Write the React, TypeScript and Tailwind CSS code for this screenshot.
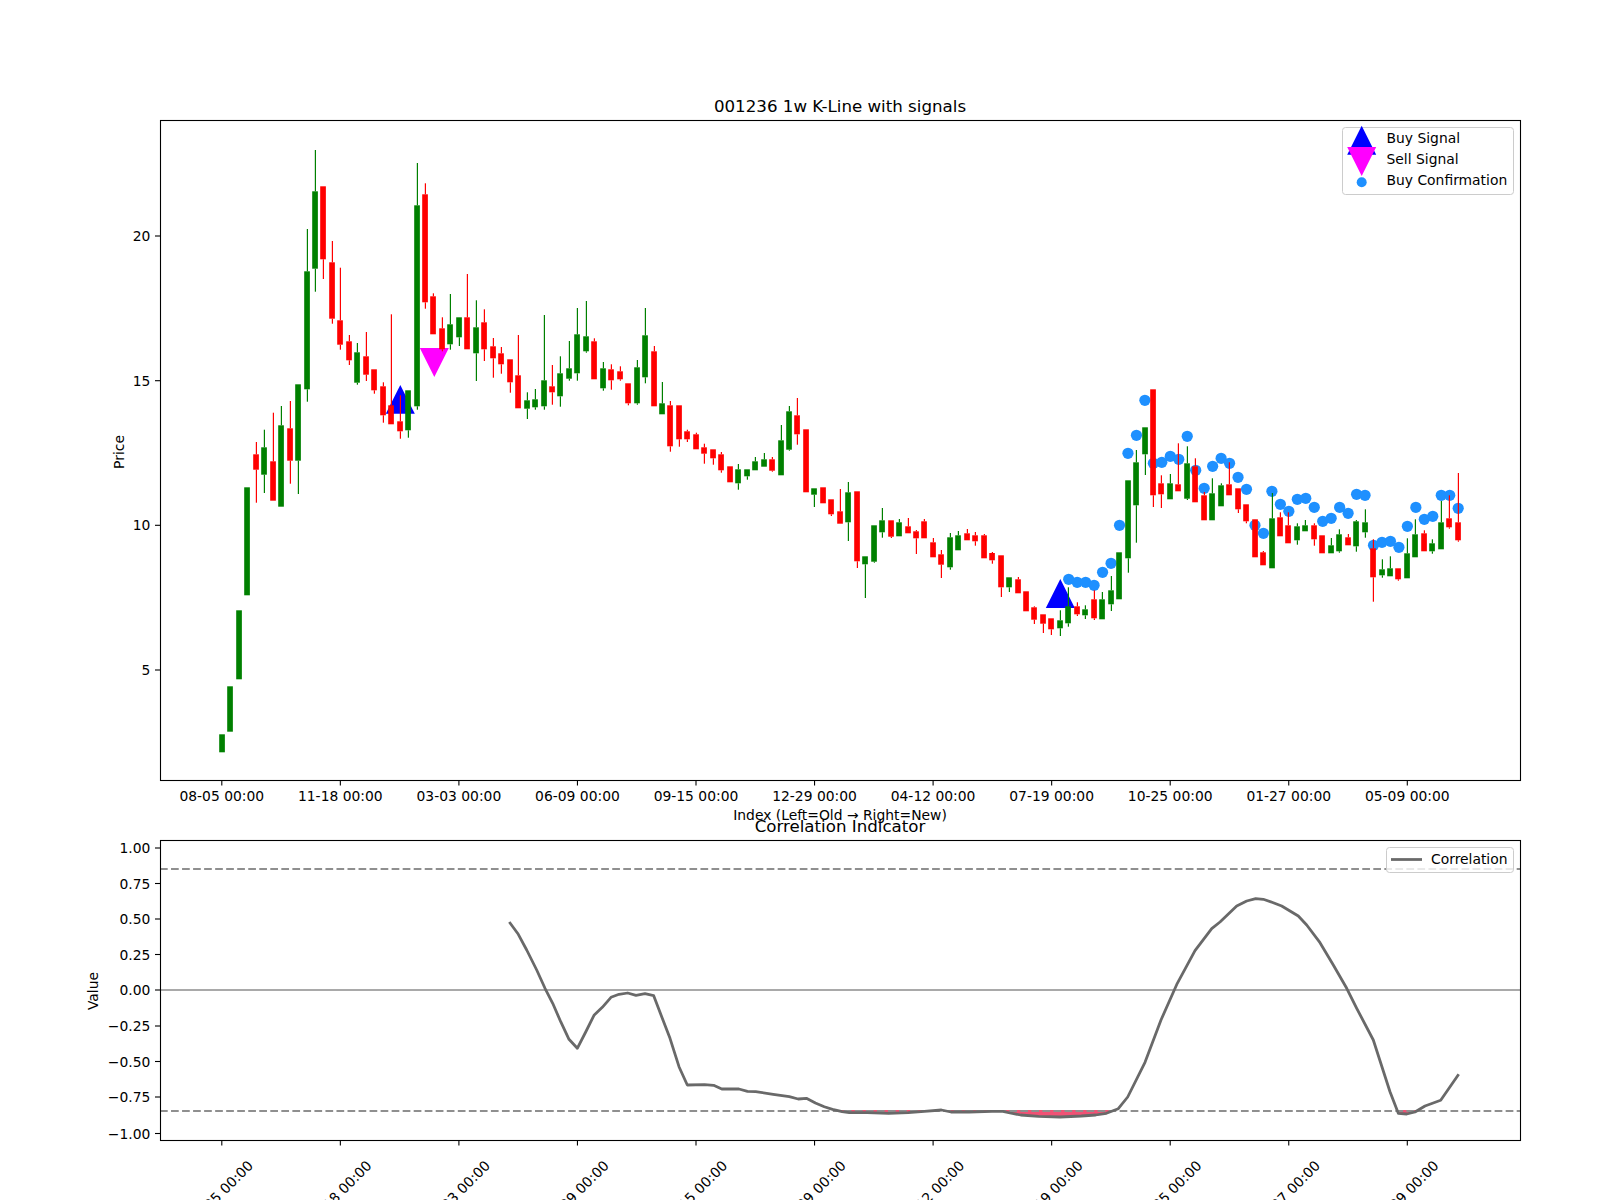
// k-line figure: candle panel on top, correlation panel below
type Candle = [string, number, number, number?, number?];

// color, body top, body bottom, wick top, wick bottom (page pixels)
const candles: Candle[] = [
  ["g", 734.3, 752.3], ["g", 686.3, 731.7], ["g", 610.3, 679.3], ["g", 487.3, 595.3],
  ["r", 454.3, 469.7, 442, 502.7], ["g", 447.3, 474.7, 429.7, 493], ["r", 461.3, 500.7, 412.7], ["g", 425.3, 506.7, 406],
  ["r", 428.3, 460.7, 401, 483.7], ["g", 384.3, 460.7, undefined, 494], ["g", 271.3, 389.3, 229, 401.7], ["g", 191.3, 268.7, 150, 291.7],
  ["r", 186.3, 259.3, undefined, 279], ["r", 262.3, 318.7, 241, 323.7], ["r", 320.3, 344.7, 267.7, 349.7], ["r", 341.3, 360.3, 335, 365],
  ["g", 352.3, 382.7, 343, 384.7], ["r", 356.3, 374.7, 332, 381], ["r", 369.3, 390.3, undefined, 393.7], ["r", 386.3, 415.3, 382.3, 422.7],
  ["r", 405.3, 424.3, 314.3], ["r", 421.3, 431.3, 395.3, 438.7], ["g", 390.3, 430.3, undefined, 437.7], ["g", 205.3, 406.3, 163, 409.7],
  ["r", 194.3, 302.3, 183.3, 308.7], ["r", 296.3, 334.3, 293.3], ["r", 328.3, 349.3, 317.3, 351.3], ["g", 324.3, 344.3, 294, 349.7],
  ["g", 317.3, 337.3, undefined, 346], ["r", 317.3, 349.3, 274], ["g", 327.3, 353.3, 300.3, 381], ["r", 322.3, 349.3, 309.3, 361],
  ["r", 346.3, 358.3, 338, 377.7], ["r", 353.3, 364.3, 347, 373.7], ["r", 359.3, 382.3, undefined, 392.7], ["r", 375.3, 408.3, 335],
  ["g", 400.3, 408.7, 392.3, 419], ["g", 399.3, 407.3, 389, 409.7], ["g", 380.3, 406.3, 315, 409.7], ["r", 386.3, 392.3, 365, 404.7],
  ["g", 373.3, 396.3, 356.3, 406.7], ["g", 368.3, 378.7, 341, 380.7], ["g", 334.3, 373.3, 308, 380.7], ["g", 336.3, 351.3, 301, 352.7],
  ["r", 341.3, 379.3, 338.3], ["g", 368.3, 388.3, 362, 390.7], ["r", 369.3, 380.3, 364.3, 389.7], ["r", 371.3, 379.3, 366.3, 380.7],
  ["r", 383.3, 403.3, undefined, 405.3], ["g", 367.3, 403.3, 360, 404.7], ["g", 335.3, 377.3, 308, 383.3], ["r", 351.3, 406.3, 346],
  ["g", 403.3, 414.3, 382], ["r", 405.3, 446.3, 401, 451.7], ["r", 405.3, 439.3, undefined, 446.7], ["r", 431.3, 439.3, 429.7, 442],
  ["r", 434.3, 449.3, 432.7], ["r", 447.3, 453.7, 443.7, 463.7], ["r", 449.3, 458.3, undefined, 464.7], ["r", 454.3, 470.3, 452, 472.7],
  ["r", 466.3, 482.3], ["g", 469.3, 483.3, 464, 489.7], ["g", 469.3, 476.3, undefined, 479.7], ["g", 461.3, 470.3, 457],
  ["g", 459.3, 466.7, 453], ["r", 459.3, 470.7, 457, 471.7], ["g", 440.3, 475.3, 425], ["g", 411.3, 449.7, 406, 450.7],
  ["r", 415.3, 434.3, 398, 444.7], ["r", 429.3, 492.3], ["g", 488.3, 494.7, undefined, 507], ["r", 487.3, 503.3],
  ["r", 499.3, 514.3, undefined, 516], ["r", 511.3, 523.7, 489], ["g", 492.3, 522.3, 482, 541], ["r", 491.3, 561.3, undefined, 568],
  ["g", 556.3, 564.3, undefined, 598], ["g", 525.3, 561.7, undefined, 562.7], ["g", 520.3, 532.3, 508, 537.7], ["r", 520.3, 536.7, undefined, 538],
  ["g", 522.3, 536.3, 519], ["r", 526.3, 533.3, 518], ["r", 531.3, 538.3, 530, 554], ["r", 521.3, 538.3, 519],
  ["r", 542.3, 557.3, 538], ["r", 554.3, 564.7, 550, 578], ["g", 537.3, 567.3, 533, 569.7], ["g", 535.3, 550.3, 531],
  ["r", 533.3, 540.3, 529], ["r", 535.3, 541.3, 532, 545.7], ["r", 535.3, 558.3, 534], ["r", 553, 560.3, 552, 563.7],
  ["r", 555.3, 587.3, undefined, 597], ["g", 577.3, 587.3, undefined, 592], ["r", 579.3, 593.3, 577], ["r", 591.3, 611.3],
  ["r", 607.3, 619.7, 606.3, 624], ["r", 614.3, 623.7, undefined, 633], ["r", 618.3, 629.3, undefined, 635], ["g", 620.3, 628.3, 610.3, 636],
  ["g", 606.3, 623.3, 587.3, 626.7], ["r", 606.3, 614.3, 602.3, 616], ["g", 609.3, 615.3, 605.3, 619], ["r", 599.3, 618.3, 590.3, 620],
  ["g", 599.3, 619.3, 592], ["g", 590.3, 604.3, 576, 611], ["g", 552.3, 599.3], ["g", 480.3, 558.3, undefined, 572.7],
  ["g", 462.3, 505.3, 450, 542.7], ["g", 427.3, 454.3, undefined, 475], ["r", 389.3, 495.3, undefined, 507], ["r", 483.3, 494.3, 475.3, 508],
  ["g", 483.3, 499.3, 474], ["r", 484.3, 491.3, 443.3], ["g", 463.3, 498.7, 446.3, 500], ["r", 466.3, 502.3, 458.3],
  ["r", 495.3, 520.3, 492], ["g", 493.3, 520.3, 478.3], ["g", 485.3, 506.3, 483.3], ["r", 484.3, 495.3, 462.3],
  ["r", 488.3, 509.3, undefined, 513], ["r", 504.3, 521.3, undefined, 523.3], ["r", 519.3, 557.3], ["r", 552.3, 565.3, 551],
  ["g", 518.3, 568.3, 493], ["r", 517.3, 536.3, 512.3], ["r", 525.3, 543.3, 512.3], ["g", 526.3, 540.3, 523.3, 544.7],
  ["g", 525.3, 531.3, 520], ["r", 525.3, 539.3, 523.3, 545.7], ["r", 535.3, 553.3], ["g", 545.3, 553.3, 538],
  ["g", 534.3, 551.3, 529.3, 552.7], ["r", 537.3, 545.3, 534], ["g", 521.3, 546.3, 520, 551.7], ["g", 522.3, 532.3, 509.3, 537.7],
  ["r", 548.3, 577.3, 539.3, 601.7], ["g", 569.3, 575.3, 559.3, 577.7], ["g", 568.3, 576.3, 556.3], ["r", 568.3, 579.3, undefined, 580.7],
  ["g", 553.3, 578.3, 538.3], ["g", 534.3, 557.3, 519.3], ["r", 533.3, 551.3, 530.3], ["g", 543.3, 551.3, 539.3, 553.7],
  ["g", 522.3, 549.3, 501], ["r", 518.3, 527.3, 495.3, 528.7], ["r", 522.3, 540.3, 473, 541.7],
];

// buy confirmation dots start at candle 100
const dots = [
  579.3, 582.3, 582.3, 585.3, 572.3, 563.3, 525.3, 453.3, 435.3, 400.3, 463.3, 462.3, 456.3, 459.3, 436.3, 470.3,
  488.3, 466.3, 458.3, 463.3, 477.3, 489.3, 525.3, 533.3, 491.3, 504.3, 511.3, 499.3, 498.3, 507.3, 521.3, 518.3,
  507.3, 513.3, 494.3, 495.3, 545.3, 542.3, 541.3, 547.3, 526.3, 507.3, 519.3, 516.3, 495.3, 495.3, 508.3,
];

const corr = [
  [509.3, 922], [518.3, 934.3], [526.7, 950], [536.7, 970], [545, 988.3], [552.7, 1003.3], [560.7, 1021.7], [569, 1039.3],
  [577.3, 1048.3], [585.7, 1032], [594, 1015.3], [602.3, 1007.3], [611, 997.3], [619, 994.3], [627.7, 993], [636, 995.3],
  [645, 993.7], [653.7, 995.7], [661.7, 1016.7], [670, 1038.3], [679, 1066.7], [687.3, 1085], [704.6, 1084.7], [713.6, 1085.3],
  [721.8, 1089], [738.9, 1089], [747.5, 1091.3], [755.7, 1091.7], [773.2, 1094.3], [789.3, 1096.7], [798.2, 1099], [806.4, 1098.3],
  [815.4, 1103], [824.3, 1106.7], [832.5, 1109.3], [842.1, 1111.7], [849.3, 1112.7], [867, 1112.7], [888.6, 1113.3], [908.2, 1112.7],
  [924.3, 1111.3], [941.4, 1110], [951, 1112], [969, 1112], [992, 1111.3], [1002.9, 1111.3], [1010, 1113], [1020.7, 1115],
  [1038.6, 1116.3], [1060, 1117], [1081.4, 1116], [1095.7, 1115], [1106.4, 1113.3], [1118.3, 1108.7], [1127.7, 1097], [1145, 1062.3],
  [1161, 1020], [1177.3, 983.3], [1195, 950.7], [1211.7, 928.7], [1220, 922], [1236.7, 906], [1246.7, 901], [1255.7, 898.7],
  [1263.3, 899.3], [1273.3, 902.7], [1281.7, 906], [1298.3, 916], [1306.7, 925], [1320, 942.7], [1333.3, 965], [1346.7, 988.3],
  [1356.7, 1008.3], [1373.3, 1040], [1390, 1091.7], [1398.3, 1113.3], [1406.7, 1114], [1415, 1112], [1425, 1106], [1440.7, 1100.3],
  [1458.7, 1074.3],
];

const dates = ["08-05", "11-18", "03-03", "06-09", "09-15", "12-29", "04-12", "07-19", "10-25", "01-27", "05-09"];
const tickX = (i: number) => 221.8 + 118.55 * i;
const candleX = (i: number) => Math.floor(222.35 + 8.465 * i);
const priceTicks = [["20", 236], ["15", 380.7], ["10", 525.3], ["5", 670]] as const;
const valueTicks = [
  ["1.00", 848], ["0.75", 883.5], ["0.50", 919], ["0.25", 954.5], ["0.00", 990],
  ["−0.25", 1026], ["−0.50", 1061.5], ["−0.75", 1097], ["−1.00", 1133.5],
] as const;

const label = "fill-black text-[13.89px]";

function Triangle({ x, top, bottom, up, color }: { x: number; top: number; bottom: number; up: boolean; color: string }) {
  const pts = up
    ? `${x},${top} ${x + 14.5},${bottom} ${x - 14.5},${bottom}`
    : `${x - 14.5},${top} ${x + 14.5},${top} ${x},${bottom}`;
  return <polygon points={pts} fill={color} />;
}

function YTicks({ ticks }: { ticks: readonly (readonly [string, number])[] }) {
  return (
    <>
      {ticks.map(([t, y]) => (
        <g key={t}>
          <line x1={155} x2={160} y1={y} y2={y} stroke="#000" strokeWidth={1.1} />
          <text x={150.3} y={y + 5} textAnchor="end" className={label}>{t}</text>
        </g>
      ))}
    </>
  );
}

function CandleChart() {
  return (
    <svg width={1600} height={708} viewBox="0 116 1600 708" className="block">
      <Triangle x={400.3} top={385} bottom={413.7} up color="#0000ff" />
      <Triangle x={434.3} top={348} bottom={377} up={false} color="#ff00ff" />
      <Triangle x={1060.3} top={579} bottom={608} up color="#0000ff" />
      {dots.map((y, i) => (
        <circle key={i} cx={222 + 8.467 * (i + 100)} cy={y} r={5.6} fill="#1e90ff" />
      ))}
      {candles.map(([c, top, bottom, wTop, wBot], i) => {
        const x = candleX(i);
        const color = c === "g" ? "#008000" : "#ff0000";
        return (
          <g key={i}>
            <rect x={x - 2.8} y={top} width={5.67} height={bottom - top} fill={color} />
            {wTop !== undefined && <rect x={x - 0.2} y={wTop} width={1.2} height={top - wTop} fill={color} />}
            {wBot !== undefined && <rect x={x - 0.2} y={bottom} width={1.2} height={wBot - bottom} fill={color} />}
          </g>
        );
      })}
      <rect x={160.5} y={120.5} width={1360} height={660} fill="none" stroke="#000" strokeWidth={1.1} />
      <YTicks ticks={priceTicks} />
      {dates.map((d, i) => (
        <g key={d}>
          <line x1={tickX(i)} x2={tickX(i)} y1={780} y2={785.5} stroke="#000" strokeWidth={1.1} />
          <text x={tickX(i)} y={801} textAnchor="middle" className={label}>{d} 00:00</text>
        </g>
      ))}
      <text x={840} y={820} textAnchor="middle" className={label}>Index (Left=Old → Right=New)</text>
      <text transform="translate(124 452) rotate(-90)" textAnchor="middle" className={label}>Price</text>

      <rect x={1342.5} y={127.5} width={171} height={67} rx={3} fill="#fff" fillOpacity={0.8} stroke="#cccccc" />
      <Triangle x={1361.7} top={125.7} bottom={154.7} up color="#0000ff" />
      <Triangle x={1361.7} top={147} bottom={176} up={false} color="#ff00ff" />
      <circle cx={1361.7} cy={182.3} r={5} fill="#1e90ff" />
      <text x={1386.5} y={143.3} className={label}>Buy Signal</text>
      <text x={1386.5} y={164} className={label}>Sell Signal</text>
      <text x={1386.5} y={185} className={label}>Buy Confirmation</text>
    </svg>
  );
}

function CorrelationChart() {
  const line = corr.map((p) => p.join(",")).join(" ");
  return (
    <svg width={1600} height={364} viewBox="0 836 1600 364" className="block">
      <defs>
        <clipPath id="below">
          <rect x={160} y={1110} width={1360} height={30} />
        </clipPath>
      </defs>
      <polygon points={`${line} 1458.7,1110 509.3,1110`} fill="#ee3f66" fillOpacity={0.9} clipPath="url(#below)" />
      <line x1={160} x2={1520} y1={990} y2={990} stroke="#a9a9a9" strokeWidth={2.08} />
      <line x1={160} x2={1520} y1={869} y2={869} stroke="#8f8f8f" strokeWidth={2.08} strokeDasharray="7.7 3.33" />
      <line x1={160} x2={1520} y1={1111} y2={1111} stroke="#8f8f8f" strokeWidth={2.08} strokeDasharray="7.7 3.33" />
      <polyline points={line} fill="none" stroke="#696969" strokeWidth={2.78} strokeLinejoin="round" />
      <rect x={160.5} y={840.5} width={1360} height={300} fill="none" stroke="#000" strokeWidth={1.1} />
      <YTicks ticks={valueTicks} />
      {dates.map((d, i) => (
        <g key={d}>
          <line x1={tickX(i)} x2={tickX(i)} y1={1140} y2={1145.5} stroke="#000" strokeWidth={1.1} />
          <text
            transform={`translate(${tickX(i) - 1.3} 1193) rotate(-45)`}
            y={5}
            textAnchor="middle"
            className={label}
          >
            {d} 00:00
          </text>
        </g>
      ))}
      <text transform="translate(98.3 991) rotate(-90)" textAnchor="middle" className={label}>Value</text>

      <rect x={1386.5} y={847.5} width={127} height={25} rx={3} fill="#fff" fillOpacity={0.8} stroke="#cccccc" />
      <line x1={1391} x2={1422} y1={859.5} y2={859.5} stroke="#696969" strokeWidth={2.78} />
      <text x={1431} y={864} className={label}>Correlation</text>
    </svg>
  );
}

export default function App() {
  return (
    <div className="w-[1600px] h-[1200px] overflow-hidden bg-white pt-[97px] font-['DejaVu_Sans',sans-serif] text-black">
      <h2 className="h-[19px] pl-[80px] text-center text-[16.67px] leading-[20px] font-normal">001236 1w K-Line with signals</h2>
      <CandleChart />
      <h2 className="relative -mt-[7px] h-[19px] pl-[80px] text-center text-[16.67px] leading-[20px] font-normal">Correlation Indicator</h2>
      <CorrelationChart />
    </div>
  );
}
